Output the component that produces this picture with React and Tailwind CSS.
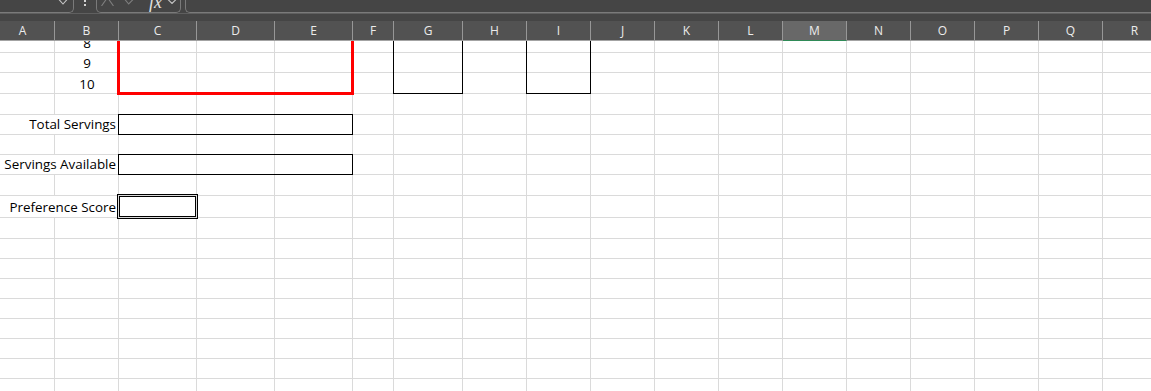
import React from 'react';

const COLS = 'grid-cols-[55px_64px_78px_78px_78px_41px_69px_64px_64px_64px_64px_64px_64px_64px_64px_64px_64px_64px]';
const ROWS = 'grid-rows-[12px_20px_21px_21px_20px_20px_20px_21px_22px_21px_20px_20px_20px_20px_20px_20px_20px_20px]';
const LETTERS = 'ABCDEFGHIJKLMNOPQR'.split('');
const CELL_COUNT = 18 * 18;

function Toolbar() {
  return (
    <div className="h-[21px] bg-[#454545]">
      <div className="h-[14px] border-b border-[#5f5f5f]">
        <div className="h-[13px] flex items-end overflow-hidden">
          {/* name box */}
          <div className="w-[74px] h-[30px] shrink-0 border-r border-b border-[#7a7a7a] rounded-br-[5px] flex items-end justify-end pr-[5px] pb-[7px]">
            <svg width="10" height="6" viewBox="0 0 10 6" fill="none">
              <polyline points="0.5,0 5,5 9.5,0" stroke="#c4c4c4" strokeWidth="1.1" />
            </svg>
          </div>
          {/* splitter dots */}
          <div className="ml-[10px] self-start flex flex-col gap-[2px] w-[2px]">
            <div className="w-[2px] h-[2px] bg-[#d2d2d2]" />
            <div className="w-[2px] h-[2px] bg-[#d2d2d2]" />
          </div>
          {/* cancel / enter / fx */}
          <div className="ml-[10px] w-[85px] h-[30px] shrink-0 border-l border-r border-b border-[#7a7a7a] rounded-b-[5px] flex items-end pl-[4px]">
            <svg className="mb-[6px]" width="13" height="8" viewBox="0 0 13 8" fill="none">
              <polyline points="0.5,8 6.5,-0.5 12.5,8" stroke="#7e7e7e" strokeWidth="1.1" />
            </svg>
            <svg className="ml-[10px] mb-[7px]" width="11" height="6" viewBox="0 0 11 6" fill="none">
              <polyline points="0.5,0 4.7,5 10.5,-1" stroke="#7e7e7e" strokeWidth="1.1" />
            </svg>
            <span className="ml-[14px] mb-[1px] text-[18px] leading-[18px] italic text-[#e2e2e2] font-['Liberation_Serif',serif]">
              fx
            </span>
            <svg className="ml-[5px] mb-[8px]" width="10" height="5" viewBox="0 0 10 5" fill="none">
              <polyline points="0.5,0 5,4.5 9.5,0" stroke="#c4c4c4" strokeWidth="1.1" />
            </svg>
          </div>
          {/* formula input */}
          <div className="ml-[4px] flex-1 h-[30px] border-l border-b border-[#7a7a7a] rounded-bl-[5px]" />
        </div>
      </div>
    </div>
  );
}

function ColumnHeader() {
  return (
    <div className={`grid ${COLS} h-[20px] bg-[#525252]`}>
      {LETTERS.map((l) => (
        <div
          key={l}
          className={`flex items-center justify-center border-r border-b border-r-[#979797] text-[12px] text-[#ececec] ${
            l === 'M' ? 'bg-[#686868] border-b-[#2f8a57]' : 'border-b-[#a3a3a3]'
          } ${l === 'A' ? 'pr-[9px]' : ''}`}
        >
          {l}
        </div>
      ))}
    </div>
  );
}

function Sheet() {
  return (
    <div className="grid">
      {/* gridlines */}
      <div className={`col-start-1 row-start-1 grid ${COLS} ${ROWS}`}>
        {Array.from({ length: CELL_COUNT }).map((_, i) => (
          <div key={i} className="border-r border-b border-[#dadada]" />
        ))}
      </div>

      {/* content layer */}
      <div className={`col-start-1 row-start-1 grid ${COLS} ${ROWS} text-[13.4px] leading-[16px] text-black`}>
        <div className="col-start-2 row-start-1 overflow-hidden flex items-end justify-center pb-[2px]">8</div>
        <div className="col-start-2 row-start-2 flex items-end justify-center pb-[2px]">9</div>
        <div className="col-start-2 row-start-3 flex items-end justify-center pb-[2px]">10</div>

        <div className="col-start-3 col-span-3 row-start-1 row-span-3 -ml-[2px] -mr-[1px] -mb-[1px] border-l-[3px] border-r-[3px] border-b-[3px] border-[#ff0000]" />
        <div className="col-start-7 row-start-1 row-span-3 -ml-[1px] border-l border-r border-b border-black" />
        <div className="col-start-9 row-start-1 row-span-3 -ml-[1px] border-l border-r border-b border-black" />

        <div className="col-start-1 col-span-2 row-start-5 bg-white border-r border-b border-[#dadada] flex items-end justify-end pr-[2px] pb-[2px] whitespace-nowrap">
          Total Servings
        </div>
        <div className="col-start-3 col-span-3 row-start-5 -ml-[1px] -mt-[1px] border border-black" />

        <div className="col-start-1 col-span-2 row-start-7 bg-white border-r border-b border-[#dadada] flex items-end justify-end pr-[2px] pb-[2px] whitespace-nowrap">
          Servings Available
        </div>
        <div className="col-start-3 col-span-3 row-start-7 -ml-[1px] -mt-[1px] border border-black" />

        <div className="col-start-1 col-span-2 row-start-9 bg-white border-r border-b border-[#dadada] flex items-end justify-end pr-[2px] pb-[2px] whitespace-nowrap">
          Preference Score
        </div>
        <div className="col-start-3 row-start-9 -ml-[2px] -mr-[1px] -mt-[2px] -mb-[1px] border-[3px] border-double border-black" />
      </div>
    </div>
  );
}

export default function App() {
  return (
    <div className="w-[1151px] h-[391px] overflow-hidden bg-white font-['Open_Sans',sans-serif]">
      <Toolbar />
      <ColumnHeader />
      <Sheet />
    </div>
  );
}
